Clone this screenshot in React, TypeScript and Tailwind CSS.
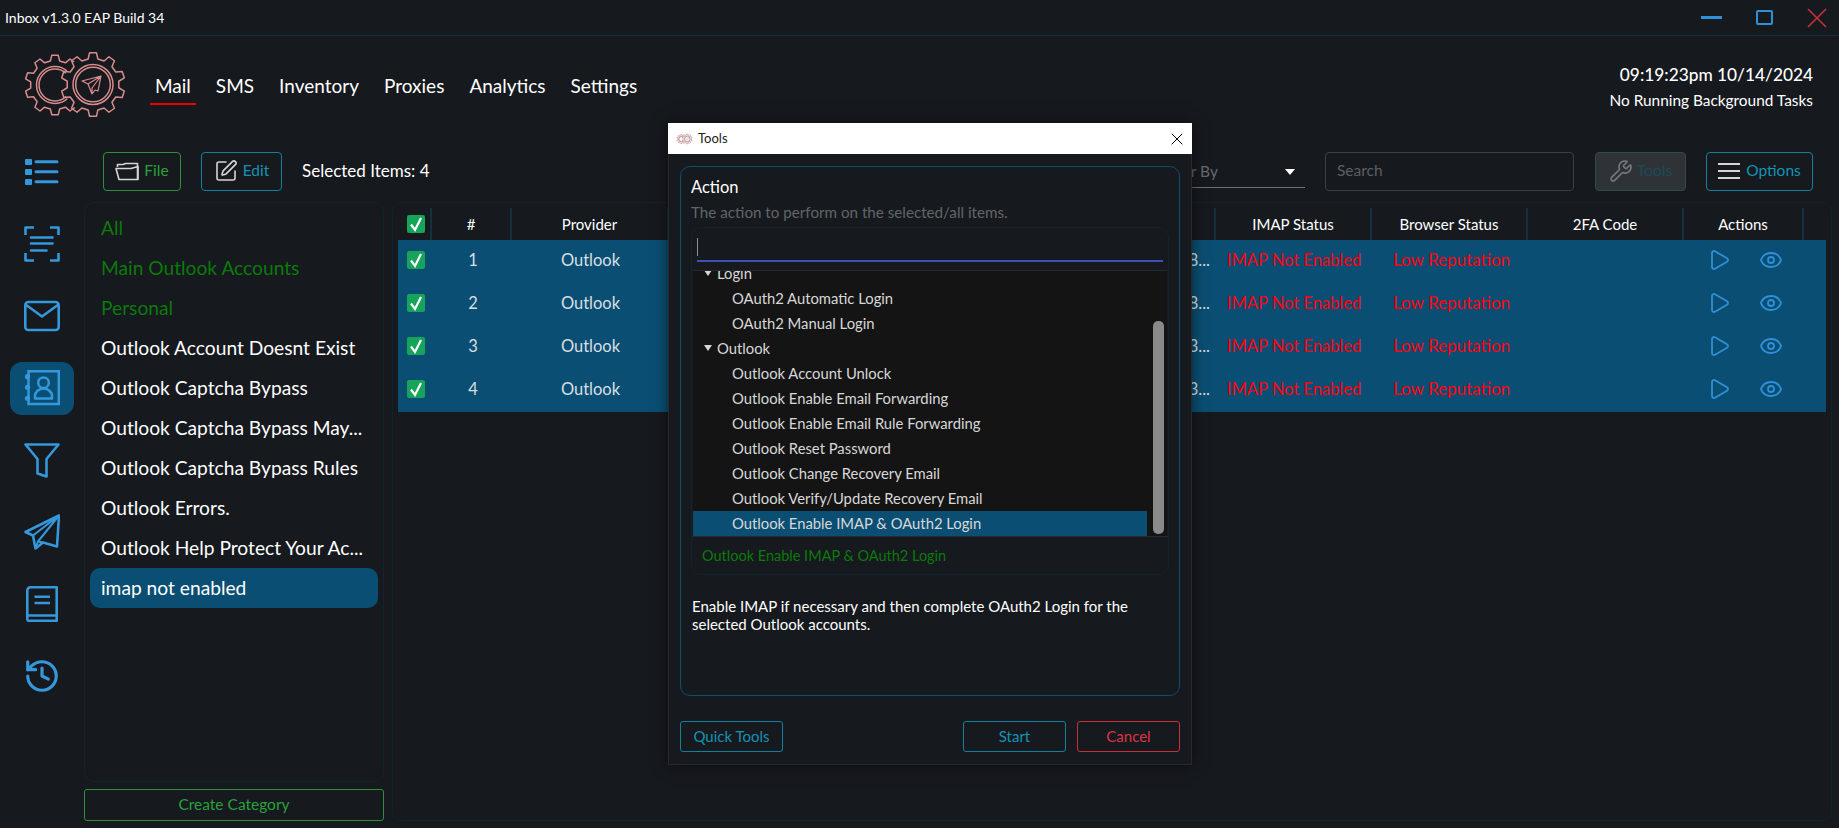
import { Eye, History, Play, SquarePen, Wrench, X } from "lucide-react";

const gearPath = (cx: number, cy: number, ro: number, ri: number, n: number) => {
  const step = (Math.PI * 2) / n;
  const pts: string[] = [];
  for (let i = 0; i < n; i++) {
    const a = i * step - Math.PI / 2;
    const add = (r: number, t: number) =>
      pts.push(`${(cx + r * Math.cos(t)).toFixed(2)} ${(cy + r * Math.sin(t)).toFixed(2)}`);
    add(ri, a - step * 0.3);
    add(ro, a - step * 0.17);
    add(ro, a + step * 0.17);
    add(ri, a + step * 0.3);
  }
  return `M${pts.join("L")}Z`;
};

const Logo = ({ className, color = "#d98c8e", width = 1.5 }: { className: string; color?: string; width?: number }) => (
  <svg viewBox="0 0 110 76" className={className} fill="none" stroke={color} strokeWidth={width} strokeLinejoin="round">
    <mask id="logo-cut" maskUnits="userSpaceOnUse" x="0" y="0" width="110" height="76">
      <rect width="110" height="76" fill="white" stroke="none" />
      <circle cx="73" cy="37.5" r="29.5" fill="black" stroke="none" />
    </mask>
    <g mask="url(#logo-cut)">
      <path d={gearPath(35, 38, 30, 24.5, 10)} />
      <circle cx="35" cy="38" r="18.5" />
      <circle cx="35" cy="38" r="16" />
    </g>
    <path d={gearPath(73, 37.5, 32, 26, 10)} />
    <circle cx="73" cy="37.5" r="20" />
    <circle cx="73" cy="37.5" r="17.3" />
    <path d="M81 29 L62 34 L68 37 L72 47 L75 43 L78 44 Z M81 29 L68 37 M81 29 L72 41 L72 47" strokeWidth="1.2" />
  </svg>
);

const ListIcon = () => (
  <svg viewBox="0 0 36 36" className="h-[36px] w-[36px]" fill="none" stroke="#3498db" strokeWidth="3" strokeLinecap="round">
    <rect x="1" y="5" width="7" height="6" rx="1" fill="#3498db" stroke="none" />
    <rect x="1" y="15" width="7" height="6" rx="1" fill="#3498db" stroke="none" />
    <rect x="1" y="25" width="7" height="6" rx="1" fill="#3498db" stroke="none" />
    <path d="M12 7.7H33M12 17.7H33M12 27.7H33" />
  </svg>
);

const ScanIcon = () => (
  <svg viewBox="0 0 36 36" className="h-[36px] w-[36px]" fill="none" stroke="#3498db" strokeWidth="2.6">
    <path d="M10 1.5H1.5V9M26 1.5H34.5V9M10 34.5H1.5V27M26 34.5H34.5V27" strokeLinejoin="round" />
    <path d="M7 11.5H28.5M7 17.5H28.5M7 24.5H22.5" strokeLinecap="round" />
  </svg>
);

const MailIcon = () => (
  <svg viewBox="0 0 36 36" className="h-[36px] w-[36px]" fill="none" stroke="#3498db" strokeWidth="2.6" strokeLinejoin="round">
    <rect x="1.3" y="4" width="33.4" height="28" rx="3" />
    <path d="M1.5 6.5L18 18.5L34.5 6.5" />
  </svg>
);

const ContactIcon = () => (
  <svg viewBox="0 0 36 36" className="h-[36px] w-[36px]" fill="none" stroke="#3498db" strokeWidth="2.5">
    <path d="M4.5 1.2H34.8V34H4.5Z" />
    <circle cx="3.5" cy="6.7" r="2.6" fill="#3498db" stroke="none" />
    <circle cx="3.5" cy="17.3" r="2.6" fill="#3498db" stroke="none" />
    <circle cx="3.5" cy="28.3" r="2.6" fill="#3498db" stroke="none" />
    <circle cx="19.5" cy="12.7" r="5.3" />
    <path d="M11 28.5V26A8.5 7.5 0 0 1 28 26V28.5Z" strokeLinejoin="round" />
  </svg>
);

const FilterIcon = () => (
  <svg viewBox="0 0 36 36" className="h-[36px] w-[36px]" fill="none" stroke="#3498db" strokeWidth="2.6" strokeLinejoin="round">
    <path d="M1.5 2.5H34.5L22.5 17V34.5L13.5 31.5V17Z" />
  </svg>
);

const PlaneIcon = () => (
  <svg viewBox="0 0 36 36" className="h-[36px] w-[36px]" fill="none" stroke="#3498db" strokeWidth="2.6" strokeLinejoin="round">
    <path d="M35 1.5L1.5 18L9 21.5L11.5 34.5L19 28.5L33 32.5Z" />
    <path d="M35 1.5L9 21.5M35 1.5L14 27.5L11.5 34.5M14 27.5L19 28.5" strokeWidth="2" />
  </svg>
);

const BookIcon = () => (
  <svg viewBox="0 0 36 36" className="h-[36px] w-[36px]" fill="none" stroke="#3498db" strokeWidth="2.6" strokeLinejoin="round">
    <path d="M6.5 1.3H32.7V34.7H5A1.5 1.5 0 0 1 3.3 33V4.5A3.2 3.2 0 0 1 6.5 1.3Z" />
    <path d="M4 29.5H32.7M10.5 10.7H26M10.5 17H26" />
  </svg>
);

const FolderIcon = () => (
  <svg viewBox="0 0 24 20" className="h-[20px] w-[24px]" fill="none" stroke="#d5d5d5" strokeWidth="1.6" strokeLinejoin="round">
    <path d="M2.5 6V3.5H8L10.5 2.5H22.5V18.5" />
    <path d="M1 7.5H16L23 5.5V18.5H4Z" />
  </svg>
);

const navItems = ["Mail", "SMS", "Inventory", "Proxies", "Analytics", "Settings"];
const sideIcons = [
  <ListIcon key="list" />,
  <ScanIcon key="scan" />,
  <MailIcon key="mail" />,
  <ContactIcon key="contact" />,
  <FilterIcon key="filter" />,
  <PlaneIcon key="plane" />,
  <BookIcon key="book" />,
  <History key="history" className="h-[38px] w-[38px] text-[#3498db]" strokeWidth={2} />,
];
const categories = [
  { name: "All", green: true },
  { name: "Main Outlook Accounts", green: true },
  { name: "Personal", green: true },
  { name: "Outlook Account Doesnt Exist" },
  { name: "Outlook Captcha Bypass" },
  { name: "Outlook Captcha Bypass May..." },
  { name: "Outlook Captcha Bypass Rules" },
  { name: "Outlook Errors." },
  { name: "Outlook Help Protect Your Ac..." },
  { name: "imap not enabled", active: true },
];
const rows = [
  { id: 1, cut: "8..." },
  { id: 2, cut: "8..." },
  { id: 3, cut: "3..." },
  { id: 4, cut: "3..." },
];
const headers = ["#", "Provider", "", "IMAP Status", "Browser Status", "2FA Code", "Actions"];
const treeItems = [
  { label: "Login", group: true },
  { label: "OAuth2 Automatic Login" },
  { label: "OAuth2 Manual Login" },
  { label: "Outlook", group: true },
  { label: "Outlook Account Unlock" },
  { label: "Outlook Enable Email Forwarding" },
  { label: "Outlook Enable Email Rule Forwarding" },
  { label: "Outlook Reset Password" },
  { label: "Outlook Change Recovery Email" },
  { label: "Outlook Verify/Update Recovery Email" },
  { label: "Outlook Enable IMAP & OAuth2 Login", active: true },
];

const Check = () => (
  <div className="flex h-[18px] w-[18px] items-center justify-center rounded-[2px] bg-[#16a35a]">
    <svg viewBox="0 0 18 18" className="h-[18px] w-[18px]" fill="none" stroke="white" strokeWidth="2.2">
      <path d="M4 9.5L8 15L14 3" />
    </svg>
  </div>
);

const gridCols = "grid grid-cols-[34px_80px_157px_547px_156px_156px_156px_120px_22px]";

const App = () => {
  return (
    <div className="relative flex h-[828px] w-[1839px] flex-col overflow-hidden bg-[#16191e] text-white [font-family:Lato,sans-serif]">
      {/* Title bar */}
      <div className="flex h-[36px] shrink-0 items-center justify-between border-b border-[#12303d] pl-[5px] pr-[12px]">
        <span className="text-[14px] leading-none">Inbox v1.3.0 EAP Build 34</span>
        <div className="flex items-center gap-[34px]">
          <div className="h-[3px] w-[21px] bg-[#2f8fd8]" />
          <div className="h-[15px] w-[17px] rounded-[2px] border-2 border-[#2f8fd8]" />
          <svg viewBox="0 0 20 20" className="h-[20px] w-[20px]" fill="none" stroke="#c8303c" strokeWidth="1.6">
            <path d="M1 1L19 19M19 1L1 19" />
          </svg>
        </div>
      </div>

      {/* Header */}
      <div className="flex h-[100px] shrink-0 items-center pl-[20px] pr-[26px]">
        <Logo className="h-[76px] w-[110px] -translate-y-[1px]" />
        <nav className="ml-[25px] flex gap-[25px] text-[19px]">
          {navItems.map((item) => (
            <div key={item} className="relative px-0 pb-[3px] pt-[3px]">
              {item}
              {item === "Mail" && <div className="absolute -left-[5px] -right-[5px] bottom-[-2px] h-[2px] bg-[#f00000]" />}
            </div>
          ))}
        </nav>
        <div className="ml-auto flex translate-y-[2px] flex-col items-end">
          <span className="text-[17.3px] font-medium leading-[24px]">09:19:23pm 10/14/2024</span>
          <span className="text-[15.4px] leading-[26px]">No Running Background Tasks</span>
        </div>
      </div>

      <div className="flex min-h-0 flex-1">
        {/* Side icons */}
        <div className="flex w-[84px] shrink-0 flex-col">
          {sideIcons.map((icon, i) => (
            <div key={i} className="flex h-[72px] items-center justify-center">
              <div className={`flex items-center justify-center ${i === 3 ? "h-[53px] w-[64px] rounded-[12px] bg-[#0a4f73]" : ""}`}>
                {icon}
              </div>
            </div>
          ))}
        </div>

        <div className="flex min-w-0 flex-1 flex-col pb-[7px] pr-[7px] pt-[15px]">
          {/* Toolbar */}
          <div className="flex h-[40px] shrink-0 items-center pl-[19px] pr-[19px]">
            <button className="flex h-[39px] w-[78px] items-center justify-center gap-[5px] rounded-[4px] border border-[#2d8f3d] text-[15.5px] text-[#2aa13a]">
              <FolderIcon />
              File
            </button>
            <button className="ml-[20px] flex h-[39px] w-[81px] items-center justify-center gap-[5px] rounded-[4px] border border-[#12809f] text-[15.5px] text-[#1593b5]">
              <SquarePen className="h-[24px] w-[24px] text-[#d5d5d5]" strokeWidth={1.6} />
              Edit
            </button>
            <span className="ml-[20px] text-[17px]">Selected Items: 4</span>

            <div className="ml-auto flex h-[37px] w-[155px] items-center justify-between self-start border-b border-[#6b7075] pl-[11px] pr-[10px] pt-[5px]">
              <span className="text-[15.5px] text-[#666a6e]">Filter By</span>
              <div className="h-0 w-0 border-x-[5px] border-t-[6px] border-x-transparent border-t-white" />
            </div>
            <div className="ml-[20px] flex h-[39px] w-[249px] items-center rounded-[4px] border border-[#3c3f44] pl-[11px] text-[15.5px] text-[#5c5f63]">
              Search
            </div>
            <button className="ml-[21px] flex h-[39px] w-[91px] items-center justify-center gap-[4px] rounded-[4px] border border-[#2f4a55] bg-[#2f3338] text-[15.5px] text-[#1e4a58]">
              <Wrench className="h-[24px] w-[24px] text-[#777a7d]" strokeWidth={1.6} />
              Tools
            </button>
            <button className="ml-[20px] flex h-[39px] w-[107px] items-center justify-center gap-[6px] rounded-[4px] border border-[#12809f] text-[15.5px] text-[#1593b5]">
              <svg viewBox="0 0 22 18" className="h-[18px] w-[22px]" stroke="#d5d5d5" strokeWidth="2.2">
                <path d="M0 2H22M0 9H22M0 16H22" />
              </svg>
              Options
            </button>
          </div>

          <div className="mt-[11px] flex min-h-0 flex-1 gap-[8px]">
            {/* Categories */}
            <div className="flex w-[300px] shrink-0 flex-col gap-[7px]">
              <div className="min-h-0 flex-1 rounded-[10px] border border-[#12232e] px-[5px] pt-[5px]">
                {categories.map((c) => (
                  <div
                    key={c.name}
                    className={`flex h-[40px] items-center rounded-[10px] pl-[11px] text-[19.2px] ${
                      c.active ? "bg-[#0a4f73]" : ""
                    } ${c.green ? "text-[#0b7a0b]" : "text-white"}`}
                  >
                    {c.name}
                  </div>
                ))}
              </div>
              <button className="h-[32px] shrink-0 rounded-[3px] border border-[#2d8f3d] text-[15.5px] text-[#2aa13a]">
                Create Category
              </button>
            </div>

            {/* Table */}
            <div className="min-w-0 flex-1 rounded-[10px] border border-[#12232e] px-[5px] pt-[5px]">
              <div className={`${gridCols} h-[32px] items-stretch`}>
                <div className="flex items-center border-r-2 border-[#12303d] pl-[9px]">
                  <Check />
                </div>
                {headers.map((h, i) => (
                  <div key={i} className="flex items-center justify-center border-r-2 border-[#12303d] text-[15px]">
                    {h}
                  </div>
                ))}
              </div>
              {rows.map((r) => (
                <div key={r.id} className={`${gridCols} h-[43px] items-center bg-[#0a4f73] pb-[3px] text-[16.5px] text-[#d8dfe3]`}>
                  <div className="pl-[9px]">
                    <Check />
                  </div>
                  <div className="pl-[2px] text-center">{r.id}</div>
                  <div className="text-center">Outlook</div>
                  <div className="pr-[6px] text-right">{r.cut}</div>
                  <div className="text-center text-[#ff0010]">IMAP Not Enabled</div>
                  <div className="pl-[3px] text-center text-[17px] text-[#ff0010]">Low Reputation</div>
                  <div />
                  <div className="flex items-center justify-center gap-[28px] pl-[2px] text-[#2f8fd8]">
                    <Play className="h-[24px] w-[24px]" strokeWidth={1.8} />
                    <Eye className="h-[24px] w-[24px]" strokeWidth={1.8} />
                  </div>
                  <div />
                </div>
              ))}
            </div>
          </div>
        </div>
      </div>

      {/* Tools dialog */}
      <div className="absolute left-[668px] top-[123px] flex h-[642px] w-[524px] flex-col border border-t-0 border-[#26292d] bg-[#16191e] shadow-[0_0_14px_rgba(0,0,0,0.55)]">
        <div className="-mx-px flex h-[31px] shrink-0 items-center bg-white pl-[8px] pr-[5px] text-[13px] text-[#222]">
          <Logo className="h-[12px] w-[17px]" color="#b98688" width={4} />
          <span className="ml-[5px]">Tools</span>
          <X className="ml-auto h-[20px] w-[20px] text-black" strokeWidth={1.2} />
        </div>

        <div className="mx-[11px] mt-[12px] flex h-[530px] shrink-0 flex-col rounded-[10px] border border-[#0f4c6e] px-[10px] pt-[8px]">
          <div className="text-[16.5px] leading-[24px]">Action</div>
          <div className="pt-[1px] text-[15.2px] leading-[24px] text-[#62666a]">The action to perform on the selected/all items.</div>

          <div className="mt-[3px] flex h-[348px] shrink-0 flex-col rounded-[10px] border border-[#12232e]">
            <div className="mx-[5px] mt-[10px] h-[24px] shrink-0 border-b-2 border-[#3f51b5]">
              <div className="h-[18px] w-px bg-[#8d8f92]" />
            </div>
            <div className="relative mx-[1px] mt-[8px] h-[266px] shrink-0 overflow-hidden border-t border-[#26292d] bg-[#141414]">
              <div className="-mt-[10.5px] w-[454px] text-[14.8px] text-[#d8d8d8]">
                {treeItems.map((t) => (
                  <div
                    key={t.label}
                    className={`flex h-[25px] items-center ${t.active ? "bg-[#0a4f73]" : ""} ${t.group ? "pl-[11px]" : "pl-[39px]"}`}
                  >
                    {t.group && (
                      <div className="mr-[5px] h-0 w-0 border-x-[4.5px] border-t-[6px] border-x-transparent border-t-[#d8d8d8]" />
                    )}
                    {t.label}
                  </div>
                ))}
              </div>
              <div className="absolute bottom-[2px] right-[3px] h-[213px] w-[11px] rounded-[5px] bg-[#8a8a8a]" />
            </div>
            <div className="flex flex-1 items-center border-t border-[#26292d] pl-[10px] text-[14.5px] text-[#0b7a0b]">
              Outlook Enable IMAP &amp; OAuth2 Login
            </div>
          </div>

          <p className="mt-[22px] pl-[1px] text-[15px] leading-[18px]">
            Enable IMAP if necessary and then complete OAuth2 Login for the
            <br />
            selected Outlook accounts.
          </p>
        </div>

        <div className="mx-[11px] mt-[25px] flex h-[31px] gap-[11px] text-[15px]">
          <button className="mr-auto w-[103px] rounded-[3px] border border-[#12809f] text-[#1593b5]">Quick Tools</button>
          <button className="w-[103px] rounded-[3px] border border-[#12809f] text-[#1593b5]">Start</button>
          <button className="w-[103px] rounded-[3px] border border-[#c8303c] text-[#dc3545]">Cancel</button>
        </div>
      </div>
    </div>
  );
};

export default App;
